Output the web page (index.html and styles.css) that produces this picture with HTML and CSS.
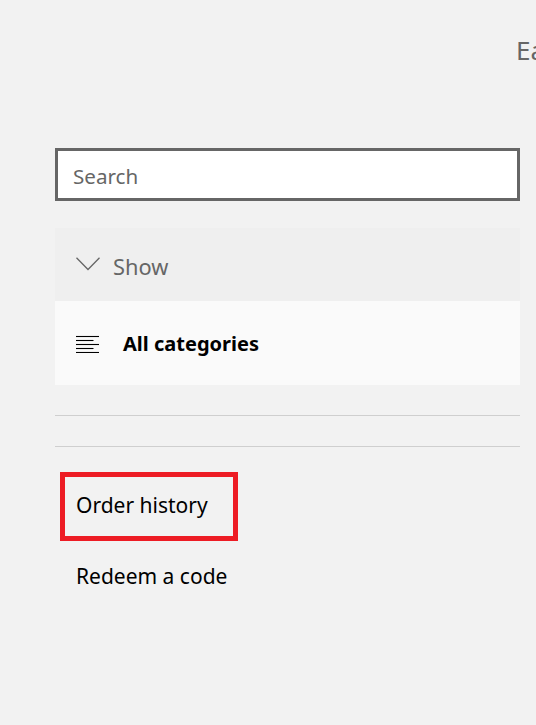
FILE: index.html
```html
<!DOCTYPE html>
<html lang="en">
<head>
<meta charset="utf-8">
<title>Store</title>
<link rel="stylesheet" href="styles.css">
</head>
<body>
<header class="top">
  <span class="top-text">Ea</span>
</header>
<aside class="sidebar">
  <div class="search">
    <input class="search-input" type="text" placeholder="Search">
  </div>
  <div class="filter">
    <div class="filter-head">
      <svg class="chev" width="24" height="14" viewBox="0 0 24 14"><path d="M0.5 0.8 L12 12.5 L23.5 0.8" fill="none" stroke="#666" stroke-width="1.3"/></svg>
      <span class="filter-label">Show</span>
    </div>
    <div class="filter-item">
      <svg class="list-ico" width="24" height="18" viewBox="0 0 24 18"><g stroke="#000" stroke-width="1.1"><path d="M0 1.5H23"/><path d="M0 5.5H17.5"/><path d="M0 9.5H23"/><path d="M0 13.5H17.5"/><path d="M0 17.5H23"/></g></svg>
      <span class="filter-item-label">All categories</span>
    </div>
  </div>
  <hr class="rule first">
  <hr class="rule">
  <ul class="links">
    <li><a class="link boxed" href="#">Order history</a></li>
    <li><a class="link" href="#">Redeem a code</a></li>
  </ul>
</aside>
</body>
</html>
```

FILE: styles.css
```css
html, body {
  margin: 0;
  padding: 0;
  background: #f2f2f2;
  font-family: "Noto Sans", "Open Sans", "Liberation Sans", sans-serif;
  color: #000;
  overflow: hidden;
}
.top {
  height: 148px;
  position: relative;
}
.top-text {
  position: absolute;
  left: 516px;
  top: 32px;
  font-size: 26px;
  color: #666;
  white-space: nowrap;
}
.sidebar {
  margin-left: 55px;
  width: 465px;
}
.search {
  height: 53px;
}
.search-input {
  box-sizing: border-box;
  width: 100%;
  height: 53px;
  border: 3px solid #666;
  background: #fff;
  padding: 2px 0 0 15px;
  font-family: inherit;
  font-size: 20.6px;
  color: #000;
  outline: none;
  margin: 0;
}
.search-input::placeholder {
  color: #666;
  opacity: 1;
}
.filter {
  margin-top: 27px;
}
.filter-head {
  height: 73px;
  background: #efefef;
  display: flex;
  align-items: center;
  padding-left: 21px;
}
.chev {
  display: block;
  margin-top: -2px;
}
.filter-label {
  margin-left: 13px;
  font-size: 21.8px;
  color: #666;
  padding-top: 4px;
}
.filter-item {
  height: 84px;
  background: #fafafa;
  display: flex;
  align-items: center;
  padding-left: 21px;
}
.list-ico {
  display: block;
  margin-top: 2px;
}
.filter-item-label {
  margin-left: 23px;
  font-size: 20px;
  font-weight: bold;
  padding-top: 0;
}
.rule {
  border: 0;
  border-top: 1px solid #cfcfcf;
  margin: 0;
  height: 0;
}
.rule.first {
  margin-top: 30px;
  margin-bottom: 30px;
}
.links {
  list-style: none;
  margin: 25px 0 0 0;
  padding: 0;
}
.link {
  box-sizing: border-box;
  display: flex;
  align-items: center;
  height: 72px;
  padding-left: 21px;
  font-size: 21px;
  color: #000;
  text-decoration: none;
  padding-bottom: 2px;
}
.boxed {
  width: 178px;
  height: 69px;
  margin-left: 5px;
  padding-left: 11px;
  border: 5px solid #ed1c24;
  padding-bottom: 4px;
}
```
